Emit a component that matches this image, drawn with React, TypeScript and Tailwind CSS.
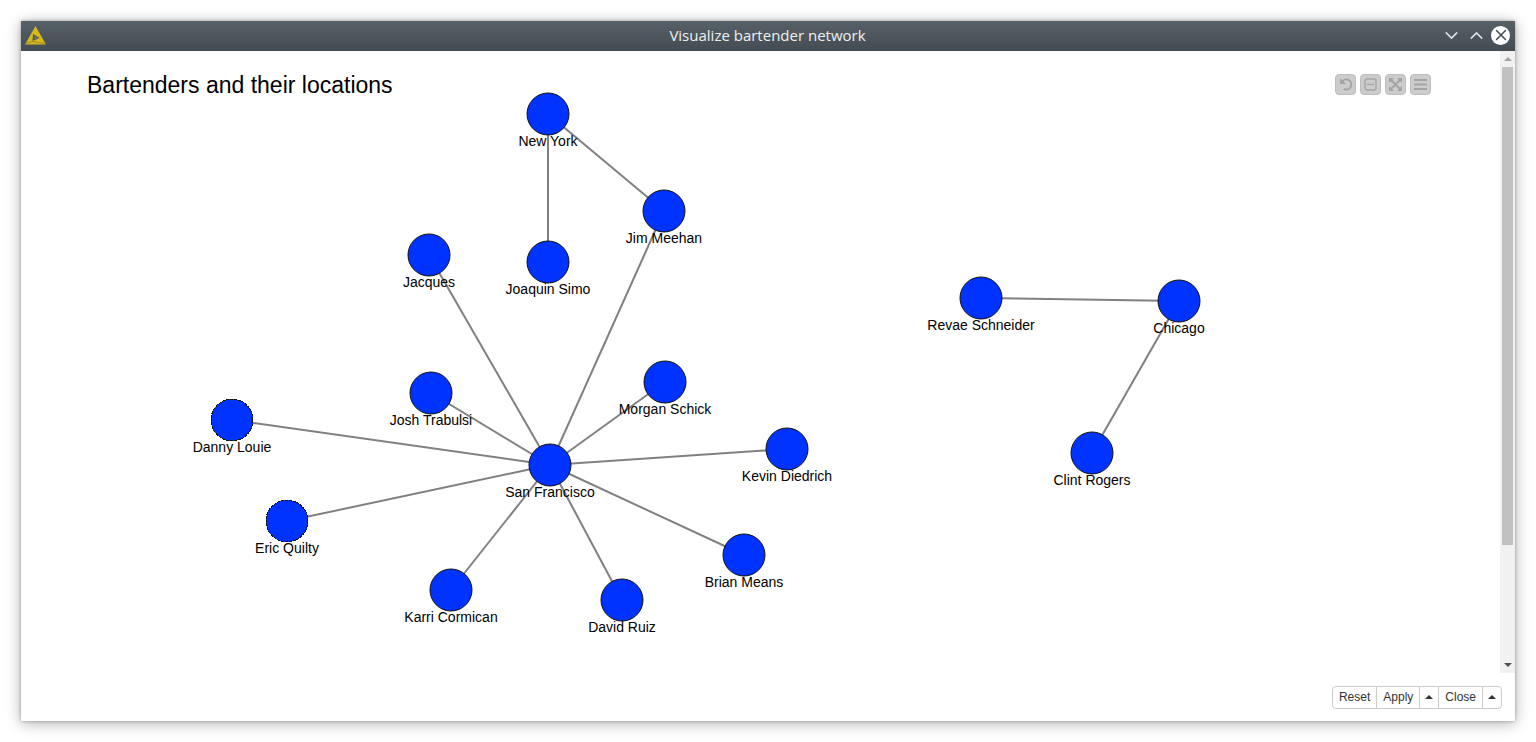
import React from 'react';
import { ChevronDown, ChevronUp, X } from 'lucide-react';

interface GraphNode {
  id: string;
  x: number;
  y: number;
  crisp?: boolean;
}

const NODES: GraphNode[] = [
  { id: 'New York', x: 527, y: 63 },
  { id: 'Jim Meehan', x: 643, y: 160 },
  { id: 'Joaquin Simo', x: 527, y: 211 },
  { id: 'Jacques', x: 408, y: 204 },
  { id: 'Josh Trabulsi', x: 410, y: 342 },
  { id: 'Morgan Schick', x: 644, y: 331 },
  { id: 'Danny Louie', x: 211, y: 369, crisp: true },
  { id: 'San Francisco', x: 529, y: 414 },
  { id: 'Kevin Diedrich', x: 766, y: 398 },
  { id: 'Eric Quilty', x: 266, y: 470, crisp: true },
  { id: 'Karri Cormican', x: 430, y: 539 },
  { id: 'David Ruiz', x: 601, y: 549 },
  { id: 'Brian Means', x: 723, y: 504 },
  { id: 'Revae Schneider', x: 960, y: 247 },
  { id: 'Chicago', x: 1158, y: 250 },
  { id: 'Clint Rogers', x: 1071, y: 402 },
];

const EDGES: [string, string][] = [
  ['New York', 'Joaquin Simo'],
  ['New York', 'Jim Meehan'],
  ['San Francisco', 'Jim Meehan'],
  ['San Francisco', 'Jacques'],
  ['San Francisco', 'Josh Trabulsi'],
  ['San Francisco', 'Morgan Schick'],
  ['San Francisco', 'Danny Louie'],
  ['San Francisco', 'Kevin Diedrich'],
  ['San Francisco', 'Eric Quilty'],
  ['San Francisco', 'Karri Cormican'],
  ['San Francisco', 'David Ruiz'],
  ['San Francisco', 'Brian Means'],
  ['Chicago', 'Revae Schneider'],
  ['Chicago', 'Clint Rogers'],
];

const findNode = (id: string) => NODES.find((n) => n.id === id)!;

function NetworkGraph() {
  return (
    <svg className="absolute inset-0 w-full h-full" role="img" aria-label="Bartender network">
      {EDGES.map(([from, to]) => {
        const a = findNode(from);
        const b = findNode(to);
        return (
          <line key={`${from}-${to}`} x1={a.x} y1={a.y} x2={b.x} y2={b.y} stroke="#808080" strokeWidth="2" />
        );
      })}
      {NODES.map((n) => (
        <g key={n.id}>
          <circle
            cx={n.x}
            cy={n.y}
            r="21"
            fill="#0033ff"
            stroke="#111"
            strokeWidth="1"
            strokeDasharray={n.crisp ? '3 1' : undefined}
            shapeRendering={n.crisp ? 'crispEdges' : 'auto'}
          />
          <text x={n.x} y={n.y + 32} textAnchor="middle" className="text-[14px] fill-black">
            {n.id}
          </text>
        </g>
      ))}
    </svg>
  );
}

function Logo() {
  return (
    <svg width="21" height="19" viewBox="0 0 21 19" aria-hidden="true">
      <path d="M10.5 0L21 18.5H0Z" fill="#d6b81c" />
      <path d="M8 8L14.5 12L7.5 15Z" fill="#4d5860" />
      <path d="M9.5 10.5L12 12L9.5 13Z" fill="#9b8a30" />
      <path d="M1 17.5L8 15.5L20 17.5" fill="none" stroke="#a58d20" strokeWidth="1" />
    </svg>
  );
}

interface ToolButtonProps {
  label: string;
  children: React.ReactNode;
}

function ToolButton({ label, children }: ToolButtonProps) {
  return (
    <button
      type="button"
      aria-label={label}
      className="w-[21px] h-[21px] flex items-center justify-center rounded-[4px] border border-[#bdbdbd] bg-[#cccccc]"
    >
      <svg width="15" height="15" viewBox="0 0 15 15" fill="none" stroke="#a4a4a4" strokeWidth="2">
        {children}
      </svg>
    </button>
  );
}

function Caret({ down = false }: { down?: boolean }) {
  return (
    <svg width="8" height="4" viewBox="0 0 8 4" fill="currentColor" aria-hidden="true">
      <path d={down ? 'M0 0H8L4 4Z' : 'M0 4H8L4 0Z'} />
    </svg>
  );
}

function Scrollbar() {
  return (
    <div className="w-[15px] shrink-0 flex flex-col items-center bg-[#f1f1f1]">
      <div className="h-4 flex items-center text-[#a3a3a3]">
        <Caret />
      </div>
      <div className="w-full grow flex flex-col px-[2px]">
        <div className="basis-[81%] bg-[#c1c1c1]" />
      </div>
      <div className="h-4 flex items-center text-[#505050]">
        <Caret down />
      </div>
    </div>
  );
}

export default function App() {
  return (
    <div className="min-h-screen flex flex-col p-[21px] bg-white font-['Liberation_Sans',Arial,sans-serif] text-black">
      <div className="grow flex flex-col bg-white shadow-[0_0_3px_rgba(0,0,0,0.3),0_2px_14px_rgba(0,0,0,0.32)]">

        {/* Title bar */}
        <header className="h-[30px] shrink-0 grid grid-cols-[1fr_auto_1fr] items-center pl-1 pr-[5px] pb-[2px] bg-linear-to-b from-[#566067] to-[#434c52]">
          <Logo />
          <h1 className="font-['Open_Sans','Noto_Sans',sans-serif] text-[15px] leading-5 text-[#eff0f1]">
            Visualize bartender network
          </h1>
          <div className="flex items-center justify-end gap-1 text-[#dfe1e2]">
            <button type="button" aria-label="Minimize">
              <ChevronDown size={21} strokeWidth={1.75} />
            </button>
            <button type="button" aria-label="Maximize">
              <ChevronUp size={21} strokeWidth={1.75} />
            </button>
            <button
              type="button"
              aria-label="Close window"
              className="w-[19px] h-[19px] flex items-center justify-center rounded-full bg-white text-[#434c52]"
            >
              <X size={18} strokeWidth={2} />
            </button>
          </div>
        </header>

        {/* View */}
        <div className="grow flex min-h-[622px]">
          <main className="relative grow">
            <NetworkGraph />
            <div className="relative flex items-start justify-between pl-[66px] pr-[69px] pt-5">
              <h2 className="text-[23px] leading-7">Bartenders and their locations</h2>
              <div className="flex gap-1 pt-[3px]">
                <ToolButton label="Reset view">
                  <path d="M4 5A5 5 0 1 1 6 12" />
                  <path d="M2 1V7H8Z" fill="#a4a4a4" stroke="none" />
                </ToolButton>
                <ToolButton label="Collapse">
                  <rect x="2" y="2" width="11" height="11" rx="2" strokeWidth="1.3" />
                  <path d="M4 7.5H11" strokeWidth="1.3" />
                </ToolButton>
                <ToolButton label="Fit to screen">
                  <path d="M3 3L12 12M12 3L3 12" />
                  <path d="M1 1H6L1 6ZM14 1V6L9 1ZM1 14V9L6 14ZM14 14H9L14 9Z" fill="#a4a4a4" stroke="none" />
                </ToolButton>
                <ToolButton label="Menu">
                  <path d="M1 3H14M1 7.5H14M1 12H14" />
                </ToolButton>
              </div>
            </div>
          </main>
          <Scrollbar />
        </div>

        {/* Actions */}
        <footer className="h-12 shrink-0 flex items-center justify-end px-[13px]">
          <div className="h-[23px] flex divide-x divide-[#cccccc] rounded-[4px] border border-[#cccccc] text-[12px] text-[#333]">
            <button type="button" className="px-[6px]">Reset</button>
            <button type="button" className="px-[6px]">Apply</button>
            <button type="button" aria-label="Apply options" className="px-[5px]">
              <Caret />
            </button>
            <button type="button" className="px-[6px]">Close</button>
            <button type="button" aria-label="Close options" className="px-[5px]">
              <Caret />
            </button>
          </div>
        </footer>
      </div>
    </div>
  );
}
